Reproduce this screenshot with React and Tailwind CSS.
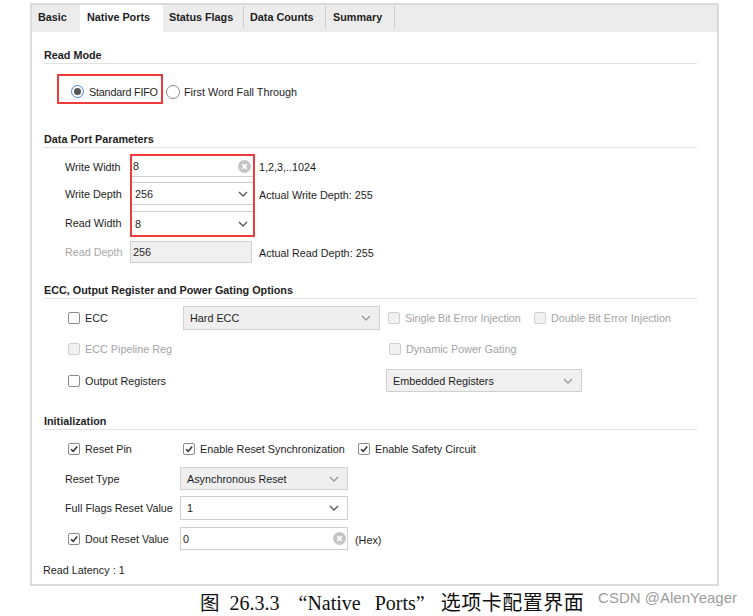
import React from "react";

const Chevron = ({ color = "#555" }) => (
  <svg width="10" height="6" viewBox="0 0 10 6">
    <path d="M1 1 L5 5 L9 1" fill="none" stroke={color} strokeWidth="1.3" />
  </svg>
);

const ClearIcon = () => (
  <svg width="13" height="13" viewBox="0 0 13 13">
    <circle cx="6.5" cy="6.5" r="6.5" fill="#c4c4c4" />
    <path d="M4.2 4.2 L8.8 8.8 M8.8 4.2 L4.2 8.8" stroke="#fff" strokeWidth="1.7" />
  </svg>
);

const Checkbox = ({ checked, disabled }) => (
  <span
    className={
      disabled
        ? "w-[12px] h-[12px] shrink-0 rounded-[2px] border border-[#cfcfcf] bg-[#f1f1f1] flex items-center justify-center"
        : "w-[12px] h-[12px] shrink-0 rounded-[2px] border border-[#8c8c8c] bg-white flex items-center justify-center"
    }
  >
    {checked && (
      <svg width="10" height="10" viewBox="0 0 10 10">
        <path d="M2 5.2 L4.2 7.4 L8.2 2.6" fill="none" stroke="#333" strokeWidth="1.6" />
      </svg>
    )}
  </span>
);

const Check = ({ checked, disabled, children, className }) => (
  <div className={className}>
    <div className="flex items-center">
      <Checkbox checked={checked} disabled={disabled} />
      <span className={disabled ? "ml-[5px] text-[#a3a3a3]" : "ml-[5px]"}>{children}</span>
    </div>
  </div>
);

const Header = ({ children, className }) => (
  <div className={className}>
    <div className="h-[16px] border-b border-[#e2e2e2] font-bold">{children}</div>
  </div>
);

export default function App() {
  return (
    <div className="w-[753px] h-[616px] bg-white font-['Liberation_Sans',Arial,sans-serif] text-[10.8px] leading-[14px] text-[#1e1e1e] pt-[3px] overflow-hidden">
      <div className="ml-[30px] w-[689px] h-[583px] border-2 border-[#dadada] flex flex-col">
        {/* Tabs */}
        <div className="h-[27px] bg-[#ececec] flex items-stretch font-bold shrink-0">
          <div className="w-[48px] pl-[6px] pt-[5px]">Basic</div>
          <div className="w-[83px] pl-[7px] pt-[5px] bg-white">Native Ports</div>
          <div className="w-[81px] pl-[6px] pt-[5px] flex justify-between">
            <span>Status Flags</span>
            <span className="w-px h-[22px] bg-[#cdcdcd] mt-[-4px]" />
          </div>
          <div className="w-[82px] pl-[6px] pt-[5px] flex justify-between">
            <span>Data Counts</span>
            <span className="w-px h-[22px] bg-[#cdcdcd] mt-[-4px]" />
          </div>
          <div className="w-[69px] pl-[7px] pt-[5px] flex justify-between">
            <span>Summary</span>
            <span className="w-px h-[22px] bg-[#cdcdcd] mt-[-4px]" />
          </div>
        </div>

        {/* Content */}
        <div className="flex-1 pl-[12px] pr-[20px] flex flex-col">
          <Header className="mt-[16px]">Read Mode</Header>

          <div className="mt-[10px] h-[30px] flex items-stretch">
            <div className="ml-[13px] w-[106px] border-2 border-[#ee3b3b] flex items-center pl-[12px] pt-[5px]">
              <span className="w-[13px] h-[13px] shrink-0 rounded-full border border-[#4d86cf] bg-white flex items-center justify-center">
                <span className="w-[7px] h-[7px] rounded-full bg-[#555]" />
              </span>
              <span className="ml-[5px] tracking-[-0.2px] whitespace-nowrap">Standard FIFO</span>
            </div>
            <div className="flex items-center pt-[5px]">
              <span className="ml-[3px] w-[14px] h-[14px] shrink-0 rounded-full border border-[#8a8a8a] bg-white" />
              <span className="ml-[4px]">First Word Fall Through</span>
            </div>
          </div>

          <Header className="mt-[28px]">Data Port Parameters</Header>

          <div className="mt-[6px] ml-[21px] flex">
            <div className="w-[65px] flex flex-col pt-[2px]">
              <div className="h-[21px] flex items-center">Write Width</div>
              <div className="mt-[5px] h-[23px] flex items-center">Write Depth</div>
              <div className="mt-[6px] h-[24px] flex items-center">Read Width</div>
              <div className="mt-[6px] h-[22px] flex items-center text-[#a8a8a8]">Read Depth</div>
            </div>
            <div className="w-[125px] flex flex-col">
              <div className="h-[83px] border-2 border-[#ee3b3b] flex flex-col">
                <div className="h-[21px] border-b border-[#cfcfcf] bg-white flex items-center justify-between pl-[1px] pr-[2px]">
                  <span>8</span>
                  <ClearIcon />
                </div>
                <div className="mt-[5px] h-[23px] border-y border-[#cfcfcf] bg-white flex items-center justify-between pl-[3px] pr-[5px]">
                  <span>256</span>
                  <Chevron />
                </div>
                <div className="mt-[6px] h-[24px] border-t border-[#cfcfcf] bg-white flex items-center justify-between pl-[3px] pr-[5px]">
                  <span>8</span>
                  <Chevron />
                </div>
              </div>
              <div className="mt-[4px] w-[122px] h-[22px] border border-[#cfcfcf] bg-[#f0f0f0] flex items-center pl-[2px]">
                256
              </div>
            </div>
            <div className="flex flex-col pt-[2px] pl-[4px]">
              <div className="h-[21px] flex items-center">1,2,3,..1024</div>
              <div className="mt-[5px] h-[23px] flex items-center pt-[3px]">Actual Write Depth: 255</div>
              <div className="mt-[6px] h-[24px]" />
              <div className="mt-[6px] h-[22px] flex items-center pt-[1px]">Actual Read Depth: 255</div>
            </div>
          </div>

          <Header className="mt-[20px]">ECC, Output Register and Power Gating Options</Header>

          <div className="ml-[24px] flex flex-col">
            <div className="mt-[7px] h-[24px] flex items-center">
              <Check className="w-[115px]">ECC</Check>
              <div className="w-[197px] h-[24px] border border-[#d0d0d0] bg-[#efefef] flex items-center justify-between pl-[6px] pr-[8px]">
                <span>Hard ECC</span>
                <Chevron color="#9a9a9a" />
              </div>
              <Check disabled className="ml-[8px] w-[146px]">Single Bit Error Injection</Check>
              <Check disabled>Double Bit Error Injection</Check>
            </div>
            <div className="mt-[9px] h-[20px] flex items-center">
              <Check disabled className="w-[321px]">ECC Pipeline Reg</Check>
              <Check disabled>Dynamic Power Gating</Check>
            </div>
            <div className="mt-[10px] h-[23px] flex items-center">
              <Check className="w-[318px]">Output Registers</Check>
              <div className="w-[196px] h-[23px] border border-[#d0d0d0] bg-[#f0f0f0] flex items-center justify-between pl-[6px] pr-[8px]">
                <span>Embedded Registers</span>
                <Chevron color="#9a9a9a" />
              </div>
            </div>
          </div>

          <Header className="mt-[22px]">Initialization</Header>

          <div className="ml-[21px] flex flex-col">
            <div className="mt-[9px] h-[20px] flex items-center pl-[3px]">
              <Check checked className="w-[115px]">Reset Pin</Check>
              <Check checked className="w-[175px]">Enable Reset Synchronization</Check>
              <Check checked>Enable Safety Circuit</Check>
            </div>
            <div className="mt-[8px] h-[23px] flex items-center">
              <div className="w-[115px]">Reset Type</div>
              <div className="w-[168px] h-[23px] border border-[#d0d0d0] bg-[#efefef] flex items-center justify-between pl-[6px] pr-[8px]">
                <span>Asynchronous Reset</span>
                <Chevron color="#9a9a9a" />
              </div>
            </div>
            <div className="mt-[6px] h-[24px] flex items-center">
              <div className="w-[115px]">Full Flags Reset Value</div>
              <div className="w-[168px] h-[24px] border border-[#cfcfcf] bg-white flex items-center justify-between pl-[6px] pr-[8px]">
                <span>1</span>
                <Chevron />
              </div>
            </div>
            <div className="mt-[7px] h-[23px] flex items-center">
              <Check checked className="w-[115px] pl-[3px]">Dout Reset Value</Check>
              <div className="w-[168px] h-[23px] border border-[#cfcfcf] bg-white flex items-center justify-between pl-[2px] pr-[1px]">
                <span>0</span>
                <ClearIcon />
              </div>
              <span className="ml-[7px] pt-[2px]">(Hex)</span>
            </div>
          </div>

          <div className="mt-[13px] ml-[-1px]">Read Latency : 1</div>
        </div>
      </div>

      {/* Caption */}
      <div className="flex items-start h-[30px]">
        <div className="ml-[200px] mt-[1px] flex items-baseline text-[20px] leading-[29px] text-[#111] font-['Liberation_Serif','Noto_Sans_CJK_SC',serif] whitespace-nowrap">
          <span className="font-['Noto_Sans_CJK_SC',sans-serif] text-[19.5px]">图</span>
          <span className="ml-[10px]">26.3.3</span>
          <span className="ml-[19px]">“Native</span>
          <span className="ml-[14px]">Ports”</span>
          <span className="ml-[16px] font-['Noto_Sans_CJK_SC',sans-serif] text-[20px] tracking-[0.5px]">选项卡配置界面</span>
        </div>
        <div className="ml-auto mr-[16px] mt-[4px] text-[15px] leading-[16px] text-[#9c9c9c] font-['Liberation_Sans',Arial,sans-serif] whitespace-nowrap">
          CSDN @AlenYeager
        </div>
      </div>
    </div>
  );
}
